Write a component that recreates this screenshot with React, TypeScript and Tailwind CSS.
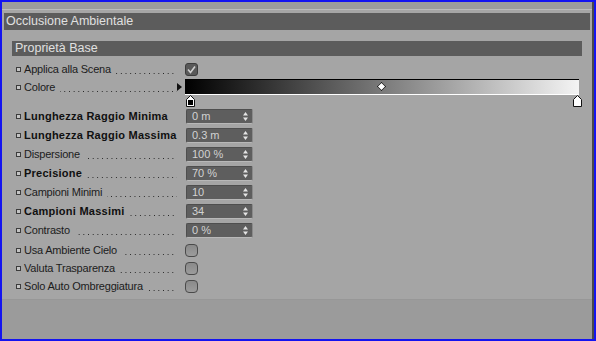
import React from "react";

interface NumRow {
  label: string;
  bold?: boolean;
  value: string;
}

const numRows: NumRow[] = [
  { label: "Lunghezza Raggio Minima", bold: true, value: "0 m" },
  { label: "Lunghezza Raggio Massima", bold: true, value: "0.3 m" },
  { label: "Dispersione", value: "100 %" },
  { label: "Precisione", bold: true, value: "70 %" },
  { label: "Campioni Minimi", value: "10" },
  { label: "Campioni Massimi", bold: true, value: "34" },
  { label: "Contrasto", value: "0 %" },
];

const checkRows = ["Usa Ambiente Cielo", "Valuta Trasparenza", "Solo Auto Ombreggiatura"];

function Label({ text, bold = false }: { text: string; bold?: boolean }) {
  return (
    <div className="flex items-center w-[175px] pl-[14px] h-full shrink-0">
      <span className="w-[5px] h-[5px] border border-[#3c3c3c] bg-[#c4c4c4] shrink-0" />
      <span
        className={`ml-[3px] whitespace-nowrap leading-[13px] shrink-0 ${
          bold ? "font-bold text-[#101010] tracking-[0.25px]" : "text-[#1c1c1c] tracking-[-0.2px]"
        }`}
      >
        {text}
      </span>
      {/* dotted leader */}
      <div className="flex-1 min-w-0 h-[13px] flex items-end pb-[2px] ml-[5px]">
        <div className="w-full h-[1px] bg-[linear-gradient(to_right,#262626_1px,transparent_1px)] bg-[length:4.7px_1px] bg-repeat-x bg-right" />
      </div>
    </div>
  );
}

function Spinner() {
  return (
    <svg width="5" height="9" viewBox="0 0 5 9" className="shrink-0">
      <path d="M2.5 0 L5 3.5 H0 Z" fill="#e4e4e4" />
      <path d="M2.5 9 L5 5.5 H0 Z" fill="#e4e4e4" />
    </svg>
  );
}

function NumField({ value }: { value: string }) {
  return (
    <div className="ml-[9px] w-[67px] h-[15px] rounded-[2px] bg-[#5e5e5e] border border-[#4e4e4e] border-b-[#b8b8b8] border-r-[#8a8a8a] flex items-center pl-[5px] pr-[4px]">
      <span className="flex-1 text-[#d2d2d2] leading-[13px] whitespace-nowrap">{value}</span>
      <Spinner />
    </div>
  );
}

function RoundCheck() {
  return (
    <div className="ml-[8px] w-[13px] h-[13px] rounded-[4px] border border-[#4a4a4a] bg-[linear-gradient(#8a8a8a,#9c9c9c)]" />
  );
}

function Marker({ dark }: { dark?: boolean }) {
  return (
    <svg width="9" height="12" viewBox="0 0 9 12">
      <path d="M0.5 4.5 L4.5 0.5 L8.5 4.5 V11.5 H0.5 Z" fill="#ffffff" stroke="#111" strokeWidth="1" />
      {dark && <rect x="2" y="5" width="5" height="5" fill="#000" />}
    </svg>
  );
}

export default function App() {
  return (
    <div
      className="w-[596px] h-[341px] bg-[#1414f0] p-[2px] text-[11px]"
      style={{ fontFamily: '"Liberation Sans", Arial, sans-serif' }}
    >
      <div className="h-full flex flex-col bg-[#9c9c9c] border-r-[2px] border-[#4a4a4a] overflow-hidden">
        {/* top strip */}
        <div className="h-[7px] shrink-0 bg-[#9d9d9d]" />
        <div className="h-[1px] shrink-0 bg-[#bdbdbd]" />
        <div className="h-[3px] shrink-0 bg-[#a6a6a6]" />

        {/* title */}
        <div className="shrink-0 bg-[#a6a6a6] px-[2px]">
          <div className="h-[17px] bg-[#5c5c5c] flex items-center pl-[2px] text-[12.5px] text-[#e0e0e0] whitespace-nowrap">
            Occlusione Ambientale
          </div>
        </div>

        {/* panel */}
        <div className="shrink-0 bg-[#a5a5a5] pt-[11px] pb-[6px]">
          <div className="mx-[10px] h-[15px] bg-[#5c5c5c] flex items-center pl-[3px] text-[12.5px] text-[#e0e0e0] whitespace-nowrap">
            Proprietà Base
          </div>

          {/* Applica alla Scena */}
          <div className="mt-[7px] h-[13px] flex items-center">
            <Label text="Applica alla Scena" />
            <div className="ml-[8px] w-[13px] h-[13px] rounded-[3px] bg-[#595959] border border-[#3c3c3c] flex items-center justify-center">
              <svg width="9" height="9" viewBox="0 0 9 9">
                <path d="M1 4.5 L3.5 7.5 L8 1.5" fill="none" stroke="#cfcfcf" strokeWidth="1.6" />
              </svg>
            </div>
          </div>

          {/* Colore */}
          <div className="mt-[3px] flex">
            <div className="h-[16px] flex items-center">
              <Label text="Colore" />
            </div>
            <div className="flex flex-col">
              <div className="flex items-center h-[16px]">
                <svg width="6" height="8" viewBox="0 0 6 8">
                  <path d="M0 0 L5 4 L0 8 Z" fill="#111" />
                </svg>
                <div className="relative ml-[2px] w-[394px] h-[16px] border-t border-[#000] border-b border-b-[#ffffff] bg-[linear-gradient(to_right,#000000,#f4f4f4)]">
                  <div className="absolute left-[193px] top-[3px] w-[7px] h-[7px] rotate-45 bg-white border border-[#222]" />
                </div>
              </div>
              <div className="flex justify-between w-[405px] pl-[9px]">
                <Marker dark />
                <Marker />
              </div>
            </div>
          </div>

          {/* numeric rows */}
          <div className="mt-[2px] flex flex-col gap-[4px]">
            {numRows.map((r) => (
              <div key={r.label} className="h-[15px] flex items-center">
                <Label text={r.label} bold={r.bold} />
                <NumField value={r.value} />
              </div>
            ))}
          </div>

          {/* check rows */}
          <div className="mt-[6px] flex flex-col gap-[5px]">
            {checkRows.map((c) => (
              <div key={c} className="h-[13px] flex items-center">
                <Label text={c} />
                <RoundCheck />
              </div>
            ))}
          </div>
        </div>

        <div className="flex-1 bg-[#9b9b9b] border-t border-[#979797]" />
      </div>
    </div>
  );
}
